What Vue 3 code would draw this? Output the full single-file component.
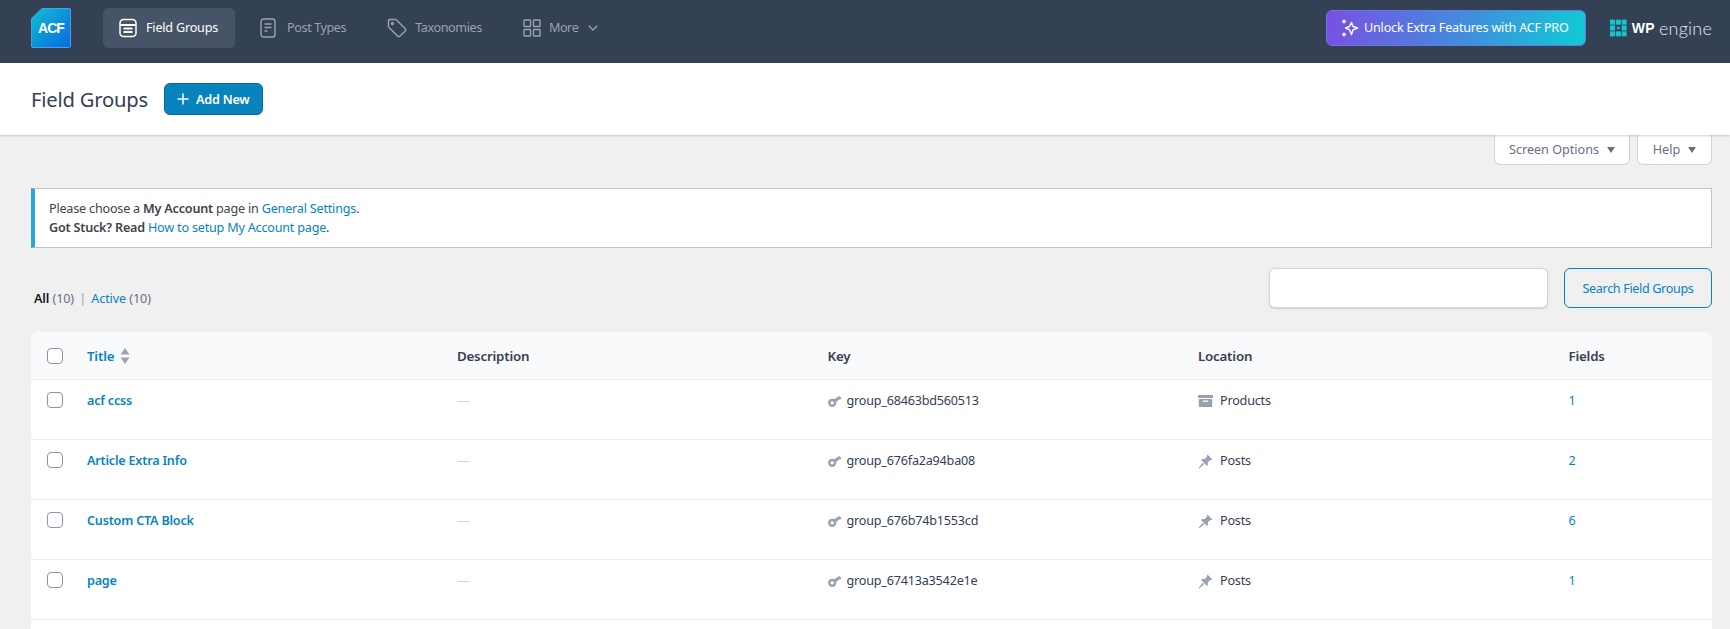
<script setup>
const rows = [
  { title: 'acf ccss', key: 'group_68463bd560513', loc: 'Products', icon: 'archive', fields: '1' },
  { title: 'Article Extra Info', key: 'group_676fa2a94ba08', loc: 'Posts', icon: 'pin', fields: '2' },
  { title: 'Custom CTA Block', key: 'group_676b74b1553cd', loc: 'Posts', icon: 'pin', fields: '6' },
  { title: 'page', key: 'group_67413a3542e1e', loc: 'Posts', icon: 'pin', fields: '1' },
  { title: '', key: '', loc: '', icon: '', fields: '' }
]
</script>

<template>
  <div class="page">
    <nav class="toolbar">
      <div class="logo"><svg class="logo-bg" width="40" height="40" viewBox="0 0 40 40"><defs><linearGradient id="lg" x1="0" y1="0" x2="1" y2="1"><stop offset="0" stop-color="#10bfd6"/><stop offset="1" stop-color="#0a68dc"/></linearGradient></defs><path d="M11 0.5H38a1.5 1.5 0 0 1 1.5 1.5V38a1.5 1.5 0 0 1-1.5 1.5H2A1.5 1.5 0 0 1 .5 38V10.500Z" fill="url(#lg)" stroke="#3ea6e6"/></svg><span class="logo-text">ACF</span></div>
      <div class="tabs">
        <a class="tab active">
          <svg class="ti" width="18" height="20" viewBox="0 0 18 20" fill="none" stroke="currentColor" stroke-width="1.500"><rect x="1" y="1.500" width="16" height="17" rx="3.500"/><path d="M1.500 7h15M4.500 10.500h9M4.500 14h9" stroke-width="2"/></svg>
          Field Groups
        </a>
        <a class="tab post">
          <svg class="ti" width="16" height="20" viewBox="0 0 16 20" fill="none" stroke="currentColor" stroke-width="1.400"><rect x="1" y="1" width="14" height="18" rx="2.500"/><path d="M4.500 6h7M4.500 9.500h7M4.500 13h3"/></svg>
          Post Types
        </a>
        <a class="tab">
          <svg class="ti" width="20" height="20" viewBox="0 0 20 20" fill="none" stroke="currentColor" stroke-width="1.400" stroke-linejoin="round"><path d="M1.500 2.500a1 1 0 0 1 1-1h6.500l9.300 9.300a1.500 1.500 0 0 1 0 2.100l-5.400 5.400a1.500 1.500 0 0 1-2.100 0L1.500 9Z"/><circle cx="5.500" cy="5.500" r="1"/></svg>
          Taxonomies
        </a>
        <a class="tab">
          <svg class="ti" width="18" height="18" viewBox="0 0 18 18" fill="none" stroke="currentColor" stroke-width="1.400"><rect x="1" y="1" width="6.500" height="6.500" rx=".6"/><rect x="10.500" y="1" width="6.500" height="6.500" rx=".6"/><rect x="1" y="10.500" width="6.500" height="6.500" rx=".6"/><rect x="10.500" y="10.500" width="6.500" height="6.500" rx=".6"/></svg>
          More
          <svg class="chev" width="10" height="6" viewBox="0 0 10 6" fill="none" stroke="currentColor" stroke-width="1.300"><path d="M.8.800 5 5l4.200-4.200"/></svg>
        </a>
      </div>
      <a class="upgrade">
        <svg width="18" height="18" viewBox="0 0 18 18" fill="none" stroke="#fff" stroke-width="1.400" stroke-linejoin="round" stroke-linecap="round"><path d="M10.500 3.500 12 7.500l4.500 1.500L12 10.800 10.500 15.500 8.500 10.800 4.500 9l4-1.500Z"/><path d="M3 1v3M1.500 2.500h3M3 14v3M1.500 15.500h3"/></svg>
        Unlock Extra Features with ACF PRO
      </a>
      <div class="wpe">
        <svg width="20" height="20" viewBox="0 0 20 20" fill="#13c5d0"><rect width="6" height="6"/><rect x="7" width="6" height="6"/><rect x="14" width="6" height="6"/><rect y="7" width="6" height="6"/><rect x="14" y="7" width="6" height="6"/><rect y="14" width="6" height="6"/><rect x="7" y="14" width="6" height="6"/><rect x="14" y="14" width="6" height="6"/><rect x="8.500" y="8.500" width="3" height="3"/></svg>
        <span class="wp">WP</span><span class="engine">engine</span>
      </div>
    </nav>

    <header class="head">
      <h1>Field Groups</h1>
      <a class="add"><svg width="12" height="12" viewBox="0 0 12 12" stroke="#fff" stroke-width="1.500"><path d="M6 .5v11M.5 6h11"/></svg>Add New</a>
    </header>

    <main class="content">
      <div class="meta">
        <button class="meta-btn so">Screen Options<i class="tri"></i></button>
        <button class="meta-btn hp">Help<i class="tri"></i></button>
      </div>

      <div class="notice">
        <p>Please choose a <b>My Account</b> page in <a>General Settings</a>.</p>
        <p><b>Got Stuck? Read</b> <a>How to setup My Account page</a>.</p>
      </div>

      <div class="filters">
        <div class="subsub"><b>All</b> <span>(10)</span> <span class="sep">|</span> <a>Active</a> <span>(10)</span></div>
        <div class="search">
          <input type="text" aria-label="Search" />
          <button>Search Field Groups</button>
        </div>
      </div>

      <section class="table">
        <div class="row th">
          <div class="cell"><span class="cb"></span></div>
          <div class="cell"><a class="sort">Title</a><svg width="10" height="16" viewBox="0 0 10 16" fill="#a0a5aa"><path d="M5 0l4.500 6.500H.500ZM5 16 .500 9.500h9Z"/></svg></div>
          <div class="cell">Description</div>
          <div class="cell">Key</div>
          <div class="cell">Location</div>
          <div class="cell">Fields</div>
        </div>
        <div v-for="(r, i) in rows" :key="i" class="row td">
          <template v-if="r.title">
            <div class="cell"><span class="cb"></span></div>
            <div class="cell"><a class="name">{{ r.title }}</a></div>
            <div class="cell dash">—</div>
            <div class="cell key">
              <svg class="ic" width="14" height="12" viewBox="0 0 14 12" fill="none"><circle cx="4.200" cy="7.800" r="2.900" stroke="#98a2b3" stroke-width="2.500"/><path d="M5.500 5 10.500 1.200l1.500 .3 1.500 1.500-1 1.500-1.200-.1L7.500 7.500Z" fill="#98a2b3"/></svg>
              {{ r.key }}
            </div>
            <div class="cell loc">
              <svg v-if="r.icon === 'archive'" class="ic" width="15" height="12" viewBox="0 0 15 12" fill="#98a2b3"><rect width="15" height="3"/><path d="M.8 4h13.400v8H.8Zm4 1.500v1.300h5.400V5.500Z" fill-rule="evenodd"/></svg>
              <svg v-else class="ic" width="15" height="15" viewBox="0 0 15 15" fill="#98a2b3"><path d="M9.500.500 14.500 5.500 13 6.200 12.300 6 9.700 8.600C10.300 10 10 11 9 12L3 6c1-1 2-1.300 3.400-.7L9 2.700 8.800 2Z"/><path d="M4.800 8.800 6.200 10.200 1 14.500.500 14Z"/></svg>
              {{ r.loc }}
            </div>
            <div class="cell"><a class="num">{{ r.fields }}</a></div>
          </template>
        </div>
      </section>
    </main>
  </div>
</template>

<style>
html, body { margin: 0; background: #f0f0f0; }
</style>

<style scoped>
.page { height: 629px; overflow: hidden; background: #f0f0f0; font-family: "Noto Sans", "Open Sans", sans-serif; font-size: 12.600px; color: #344054; letter-spacing: -0.2px; }
.page * { box-sizing: border-box; }
a { color: #0783be; text-decoration: none; cursor: pointer; }

.toolbar { display: flex; align-items: center; height: 63px; background: #344054; padding: 0 18px 0 31px; }
.logo { position: relative; width: 40px; height: 40px; margin-top: -8px; }
.logo-bg { display: block; }
.logo-text { position: absolute; left: 0; right: 0; top: 11px; text-align: center; color: #fff; font: 900 14px/18px "Liberation Sans", sans-serif; letter-spacing: -1px; }
.tabs { display: flex; gap: 9px; margin-left: 32px; margin-top: -8px; }
.tab { display: flex; align-items: center; gap: 8px; height: 40px; padding: 0 16px; border-radius: 6px; color: #98a2b3; letter-spacing: -0.4px; }
.tab.active { gap: 9px; padding-right: 17px; background: #475467; color: #fff; letter-spacing: -0.2px; }
.tab.post { gap: 11px; }
.chev { margin-left: 2px; }
.upgrade { display: flex; align-items: center; gap: 5px; height: 36px; width: 260px; margin-left: auto; margin-top: -8px; padding-left: 14px; border-radius: 6px; color: #fff; white-space: nowrap; background: linear-gradient(100deg, #7a4fe4 0%, #3f8fdb 55%, #10cbd6 100%); border: 1px solid #6a78e0; }
.wpe { display: flex; align-items: center; width: 102px; margin-left: 24px; margin-top: -8px; color: #fff; }
.wp { margin-left: 5px; font: 900 14px/20px "Liberation Sans", sans-serif; letter-spacing: .4px; }
.engine { margin-left: 4px; font: 300 18px/20px Lato, sans-serif; letter-spacing: .2px; color: #e4e7ec; }

.head { display: flex; align-items: center; height: 72px; padding: 0 31px; background: #fff; box-shadow: 0 1px 2px rgba(16, 24, 40, .2); position: relative; }
h1 { margin: 0; font-size: 20.200px; font-weight: 400; line-height: 28px; color: #344054; }
.add { display: flex; align-items: center; gap: 7px; height: 32px; margin-left: 16px; padding: 0 12px; border-radius: 6px; background: #0783be; border: 1px solid #066998; color: #fff; font-weight: 600; }

.content { padding: 0 18px 0 31px; }
.meta { display: flex; justify-content: flex-end; gap: 7px; }
.meta-btn { display: flex; align-items: center; height: 30px; padding: 0; background: #fff; border: 1px solid #d0d5dd; border-top: 0; border-radius: 0 0 6px 6px; font: inherit; color: #667085; justify-content: center; gap: 8px; }
.so { width: 136px; }
.hp { width: 75px; }
.tri { width: 0; height: 0; border-left: 4.500px solid transparent; border-right: 4.500px solid transparent; border-top: 6px solid #667085; }

.notice { height: 60px; margin-top: 23px; padding: 10px 14px 0 14px; background: #fff; border: 1px solid #c3c4c7; border-left: 4px solid #2ea5d8; color: #3c434a; line-height: 19px; }
.notice p { margin: 0; }
.notice b { font-weight: 600; }

.filters { display: flex; justify-content: space-between; height: 84px; padding-top: 20px; }
.subsub { margin: 21px 0 0 3px; line-height: 20px; color: #667085; letter-spacing: -0.1px; }
.subsub b { color: #101828; font-weight: 600; }
.sep { color: #98a2b3; margin: 0 2px; }
.search { display: flex; gap: 16px; }
.search input { width: 279px; height: 40px; background: #fff; border: 1px solid #d0d5dd; border-radius: 6px; box-shadow: 0 1px 2px rgba(16, 24, 40, .15); outline: 0; }
.search button { width: 148px; height: 40px; padding: 0; background: transparent; border: 1px solid #0783be; border-radius: 6px; color: #0783be; font: inherit; letter-spacing: -0.35px; }

.table { background: #fff; border-radius: 8px 8px 0 0; overflow: hidden; }
.row { display: grid; grid-template-columns: 56px 370px 370.500px 370.500px 370.500px 1fr; border-bottom: 1px solid #eaecf0; }
.th { height: 48px; background: #f9fafb; align-items: center; font-size: 13.300px; font-weight: 600; color: #344054; }
.td { height: 60px; padding-top: 12px; align-items: start; }
.cell { display: flex; align-items: center; min-height: 16px; line-height: 16px; gap: 6px; }
.td .cell { height: 18px; }
.key { gap: 5px; }
.loc { gap: 7px; }
.cb { display: block; width: 16px; height: 16px; margin-left: 16px; background: #fff; border: 1px solid #8a94a6; border-radius: 4px; }
.td .cb { margin-top: -2px; }
.sort { font-weight: 600; }
.name { font-weight: 600; }
.dash { color: #d0d5dd; }
.ic { flex: none; }
</style>
